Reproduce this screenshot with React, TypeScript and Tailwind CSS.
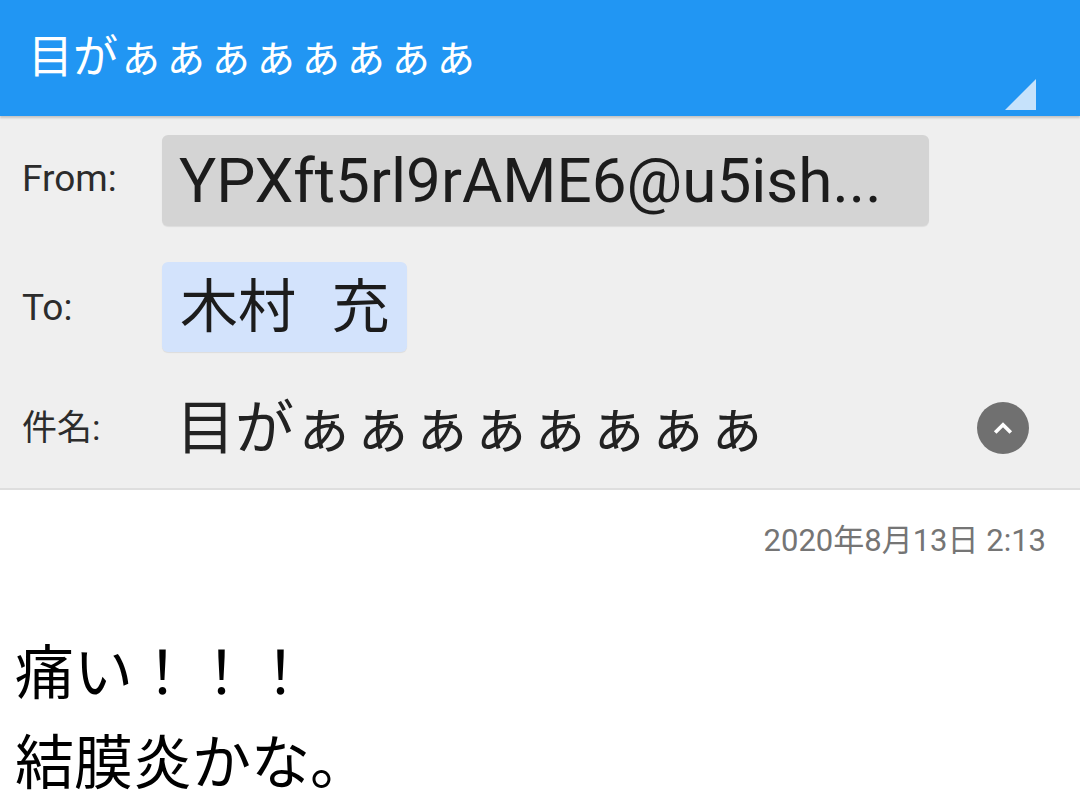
import React from "react";

const FONT = "font-['Roboto','Noto_Sans_CJK_JP',sans-serif]";

export default function App() {
  return (
    <div className={`w-[1080px] h-[807px] overflow-hidden bg-white ${FONT}`}>
      {/* Header */}
      <div className="relative z-10 h-[116px] bg-[#2196f3] shadow-[0_2px_2px_rgba(0,0,0,0.18)] flex items-center pl-[28px]">
        <span className="text-white text-[45px] leading-none pb-[2px]">目がぁぁぁぁぁぁぁぁ</span>
        <svg
          className="absolute right-[44px] bottom-[6px]"
          width="31"
          height="31"
          viewBox="0 0 31 31"
        >
          <polygon points="31,0 31,31 0,31" fill="#c6e2fb" />
        </svg>
      </div>

      {/* Header fields */}
      <div className="bg-[#efefef] border-b-2 border-[#dedede] px-[22px]">
        <div className="grid grid-cols-[140px_1fr] pt-[19px]">
          <div className="self-center text-[37px] text-[#2c2c2c] leading-none pb-[4px]">From:</div>
          <div className="h-[91px] w-[767px] rounded-[6px] bg-[#d4d4d4] shadow-[0_1px_1px_rgba(0,0,0,0.08)] flex items-center px-[17px] text-[62px] text-[#1c1c1c] leading-none whitespace-nowrap overflow-hidden">
            YPXft5rl9rAME6@u5ish...
          </div>
        </div>
        <div className="grid grid-cols-[140px_1fr] mt-[36px]">
          <div className="self-center text-[37px] text-[#2c2c2c] leading-none">To:</div>
          <div className="justify-self-start h-[90px] rounded-[6px] bg-[#d3e3fc] shadow-[0_1px_1px_rgba(0,0,0,0.08)] flex items-center px-[18px] text-[58px] text-[#1c1c1c] leading-none [word-spacing:21px]">
            木村 充
          </div>
        </div>
        <div className="grid grid-cols-[140px_1fr_auto] items-center h-[136px] pt-[16px]">
          <div className="text-[35px] text-[#2c2c2c] leading-none">件名:</div>
          <div className="pl-[14px] text-[59px] text-[#222222] leading-none whitespace-nowrap">
            目がぁぁぁぁぁぁぁぁ
          </div>
          <div className="mr-[29px] w-[52px] h-[52px] rounded-full bg-[#707070] flex items-center justify-center">
            <svg width="26" height="26" viewBox="0 0 24 24" fill="none" stroke="white" strokeWidth="3.4" strokeLinecap="square" strokeLinejoin="miter">
              <polyline points="6,15 12,9 18,15" />
            </svg>
          </div>
        </div>
      </div>

      {/* Date */}
      <div className="pt-[31px] pr-[34px] text-right text-[31px] leading-[40px] text-[#757575]">
        2020年8月13日 2:13
      </div>

      {/* Body */}
      <div className="mt-[68px] pl-[15px] text-[59px] leading-[90px] text-black">
        <div>痛い！！！</div>
        <div>結膜炎かな。</div>
      </div>
    </div>
  );
}
